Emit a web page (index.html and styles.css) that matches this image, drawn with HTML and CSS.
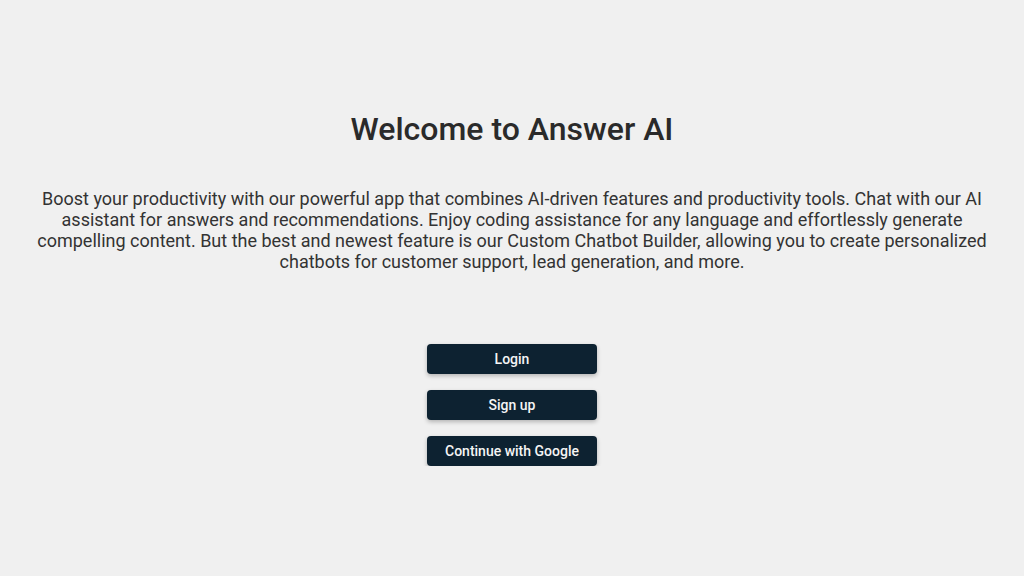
FILE: index.html
```html
<!DOCTYPE html>
<html lang="en">
<head>
  <meta charset="UTF-8" />
  <title>Answer AI</title>
  <link rel="stylesheet" href="styles.css">
</head>
<body>
  <div class="container">
    <h1 class="title">Welcome to Answer AI</h1>
    <p class="intro">Boost your productivity with our powerful app that combines AI-driven features and productivity tools. Chat with our AI assistant for answers and recommendations. Enjoy coding assistance for any language and effortlessly generate compelling content. But the best and newest feature is our Custom Chatbot Builder, allowing you to create personalized chatbots for customer support, lead generation, and more.</p>
    <div class="actions">
      <button class="btn">Login</button>
      <button class="btn">Sign up</button>
      <button class="btn">Continue with Google</button>
    </div>
  </div>
</body>
</html>
```

FILE: styles.css
```css
body {
  margin: 0;
  font-family: 'Roboto', sans-serif;
  background-color: #f0f0f0;
}
.container {
  display: flex;
  flex-direction: column;
  align-items: center;
  padding: 110px 36px 0;
}
.title {
  margin: 0;
  font-size: 32px;
  font-weight: 500;
  line-height: 38px;
  color: #2a2a2a;
}
.intro {
  margin: 40px 0 0;
  font-size: 18px;
  line-height: 21px;
  color: #333;
  text-align: center;
}
.actions {
  display: flex;
  flex-direction: column;
  gap: 16px;
  margin-top: 72px;
}
.btn {
  width: 170px;
  height: 30px;
  border: none;
  border-radius: 4px;
  background-color: #0d2231;
  color: #f5f5f5;
  font-family: 'Roboto', sans-serif;
  font-size: 14px;
  font-weight: 500;
  box-shadow: 0 2px 4px rgba(0, 0, 0, 0.25);
  cursor: pointer;
}
```
